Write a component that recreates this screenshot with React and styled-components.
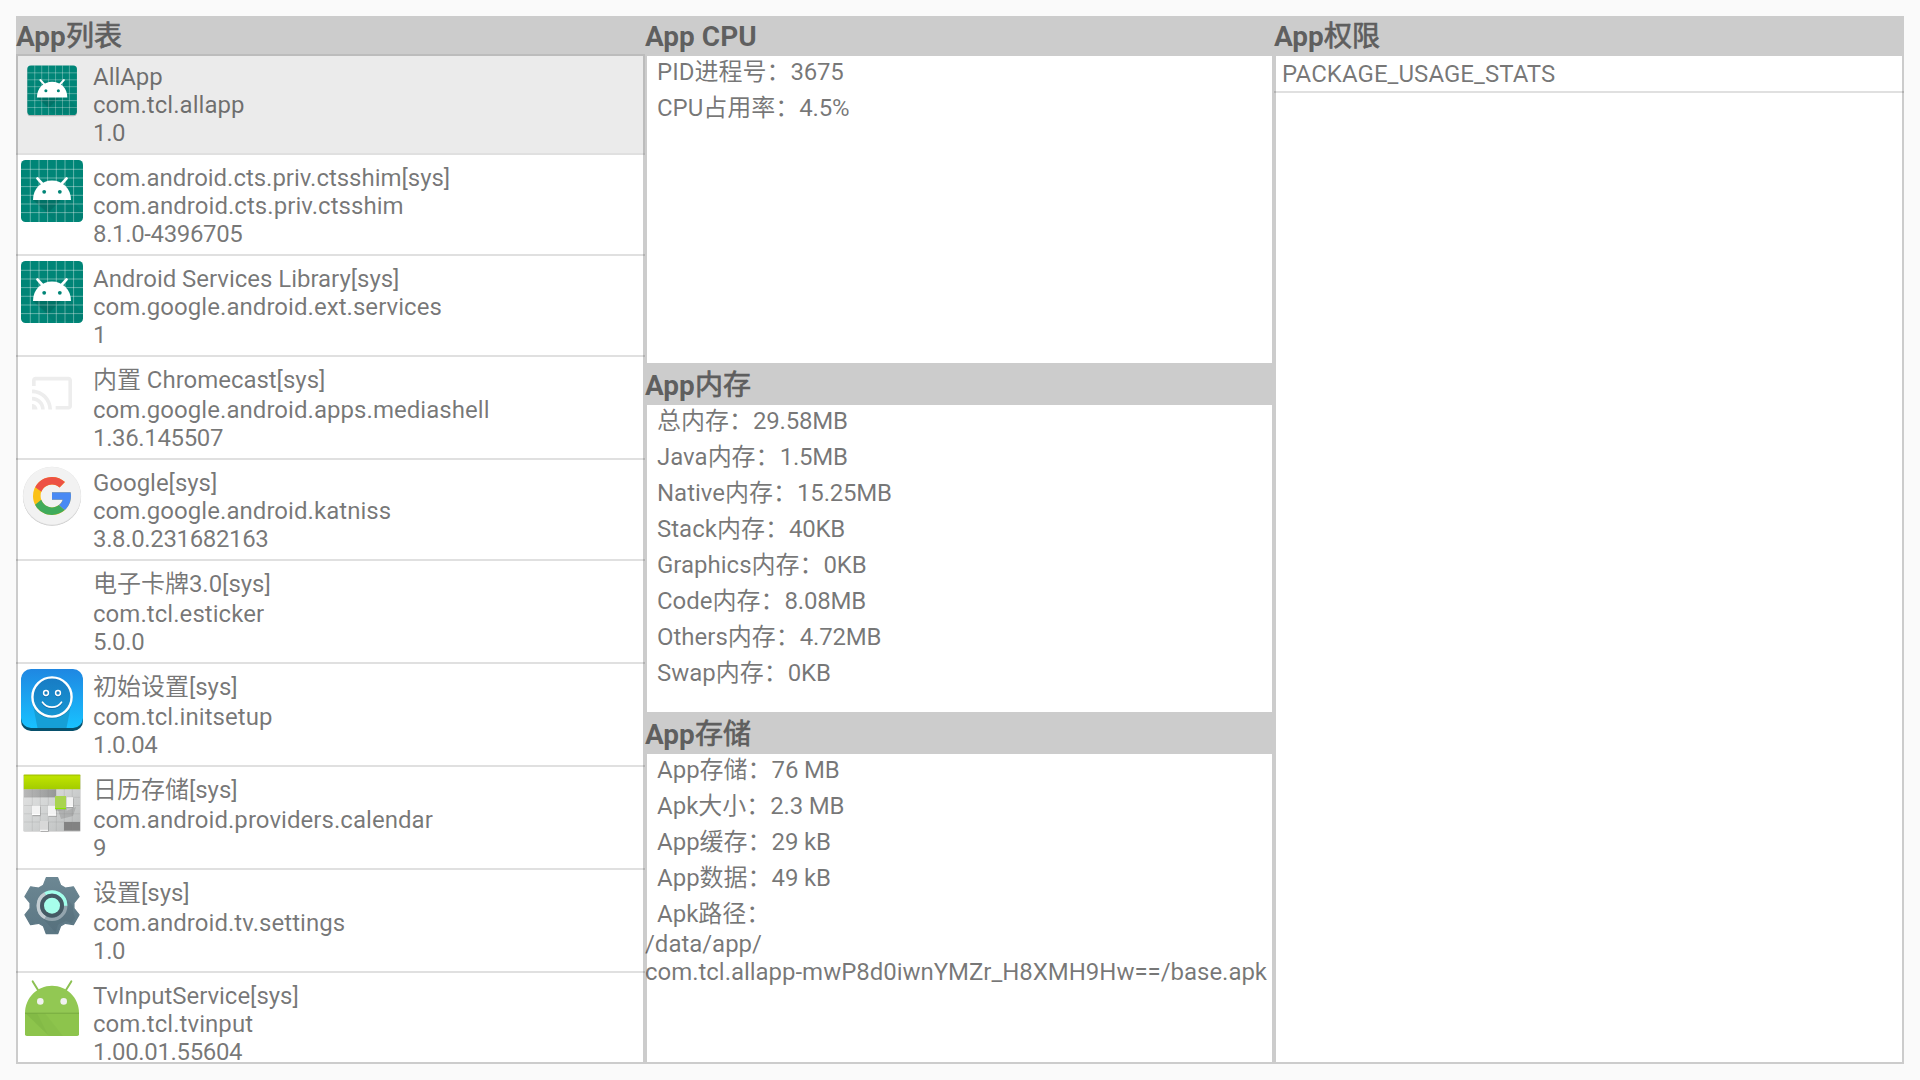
import React from 'react';
import styled, { createGlobalStyle } from 'styled-components';

const GlobalStyle = createGlobalStyle`
  * { box-sizing: border-box; }
  body {
    margin: 0;
    background: #fafafa;
    color: rgba(0, 0, 0, 0.54);
    font-family: Roboto, 'Noto Sans CJK SC', sans-serif;
    font-size: 24px;
    line-height: 28px;
  }
`;

const Screen = styled.main`
  display: grid;
  grid-template-columns: 629px 629px 630px;
  width: 1920px;
  height: 1080px;
  padding: 16px;
  overflow: hidden;
`;

const Column = styled.section`
  display: flex;
  flex-direction: column;
  min-width: 0;
  min-height: 0;
`;

const Title = styled.h2`
  flex: none;
  height: 38px;
  margin: 0;
  padding-top: 5px;
  background: #ccc;
  font-size: 28px;
  font-weight: 700;
  line-height: 32px;
  white-space: nowrap;
`;

const Han = styled.span`
  font-weight: 400;
  -webkit-text-stroke: 0.7px #5e5e5e;
  color: #5e5e5e;
`;

const Panel = styled.div`
  flex: ${(p) => (p.$height ? `0 0 ${p.$height}px` : '1 1 0')};
  min-height: 0;
  overflow: hidden;
  background: #fff;
  box-shadow: inset 0 0 0 2px #ccc;
`;

const AppRow = styled.div`
  display: flex;
  align-items: flex-start;
  gap: 10px;
  height: ${(p) => (p.$tall ? 103 : 101)}px;
  padding-left: 5px;
  border-bottom: 2px solid rgba(0, 0, 0, 0.12);
  background: ${(p) => (p.$selected ? 'rgba(0, 0, 0, 0.08)' : 'transparent')};
  background-clip: padding-box;
`;

const IconBox = styled.div`
  flex: none;
  width: 62px;
  height: 62px;
  margin-top: 5px;

  svg { display: block; }
`;

const AppText = styled.div`
  padding-top: 9px;
  white-space: nowrap;
`;

const AppName = styled.div`
  margin-bottom: ${(p) => (p.$tall ? 2 : 0)}px;
  letter-spacing: -0.03px;
`;

const PackageName = styled.div`
  letter-spacing: 0.05px;
`;

const Version = styled.div`
  margin-top: 2px;
  line-height: 24px;
  letter-spacing: -0.36px;
`;

const Stat = styled.div`
  padding-left: 12px;
  line-height: 36px;
  white-space: nowrap;
`;

const StatValue = styled.span`
  letter-spacing: -0.2px;
`;

const PathText = styled.div`
  margin-top: -2px;
  letter-spacing: -0.03px;
`;

const Permission = styled.div`
  height: 39px;
  padding: 6px 0 0 8px;
  border-bottom: 2px solid rgba(0, 0, 0, 0.12);
  letter-spacing: 0.05px;
`;

const Svg = ({ children, viewBox = '0 0 62 62' }) => (
  <svg width="62" height="62" viewBox={viewBox}>{children}</svg>
);

const GRID = [9.3, 18, 26.6, 35.3, 44, 52.6];

const GridRobot = ({ small }) => (
  <Svg viewBox={small ? '-7.9 -8 77.5 77.5' : '0 0 62 62'}>
    {small && <rect x="0" y="1.6" width="62" height="62" rx="4.5" fill="#000" opacity="0.22" />}
    <rect width="62" height="62" rx="4.5" fill="#008577" />
    <path
      d={GRID.map((v) => `M${v} 0V62M0 ${v}H62`).join('')}
      stroke="#fff"
      strokeOpacity="0.42"
      strokeWidth="0.9"
    />
    <path d="M12 40L32 60L62 60V52L50 40Z" fill="#000" opacity="0.04" />
    <path d="M12 40L27 53L40 40Z" fill="#000" opacity="0.1" />
    <path d="M12 40C12 28.5 20.5 20.5 31 20.5S50 28.5 50 40Z" fill="#fff" />
    <path d="M16.4 18.4L21.5 24M45.6 18.4L40.5 24" stroke="#fff" strokeWidth="2.6" strokeLinecap="round" />
    <circle cx="23.2" cy="31.8" r="1.9" fill="#008577" />
    <circle cx="38.8" cy="31.8" r="1.9" fill="#008577" />
  </Svg>
);

const Cast = () => (
  <Svg>
    <g transform="translate(9.2 9.4) scale(1.818)">
      <path
        fill="#ededed"
        d="M21 3H3c-1.1 0-2 .9-2 2v3h2V5h18v14h-7v2h7c1.1 0 2-.9 2-2V5c0-1.1-.9-2-2-2zM1 18v3h3c0-1.66-1.34-3-3-3zm0-4v2c2.76 0 5 2.24 5 5h2c0-3.87-3.13-7-7-7zm0-4v2c4.97 0 9 4.03 9 9h2c0-6.08-4.93-11-11-11z"
      />
    </g>
  </Svg>
);

const GoogleG = () => (
  <Svg>
    <circle cx="31" cy="31.8" r="29" fill="#c4c4c4" />
    <circle cx="31" cy="31" r="29.2" fill="#e2e2e2" />
    <circle cx="31" cy="30.7" r="28.8" fill="#f2f2f2" />
    <g transform="translate(8.2 8.2) scale(0.95)">
      <path fill="#fbc116" d="M43.611 20.083H42V20H24v8h11.303c-1.649 4.657-6.08 8-11.303 8c-6.627 0-12-5.373-12-12c0-6.627 5.373-12 12-12c3.059 0 5.842 1.154 7.961 3.039l5.657-5.657C34.046 6.053 29.268 4 24 4C12.955 4 4 12.955 4 24c0 11.045 8.955 20 20 20c11.045 0 20-8.955 20-20C44 22.659 43.862 21.35 43.611 20.083z" />
      <path fill="#ed5144" d="M6.306 14.691l6.571 4.819C14.655 15.108 18.961 12 24 12c3.059 0 5.842 1.154 7.961 3.039l5.657-5.657C34.046 6.053 29.268 4 24 4C16.318 4 9.656 8.337 6.306 14.691z" />
      <path fill="#3fab5b" d="M24 44c5.166 0 9.86-1.977 13.409-5.192l-6.19-5.238C29.211 35.091 26.715 36 24 36c-5.202 0-9.619-3.317-11.283-7.946l-6.522 5.025C9.505 39.556 16.227 44 24 44z" />
      <path fill="#4889f4" d="M43.611 20.083H42V20H24v8h11.303c-.792 2.237-2.231 4.166-4.084 5.569l6.19 5.238C36.971 39.205 44 34 44 24C44 22.659 43.862 21.35 43.611 20.083z" />
    </g>
  </Svg>
);

const Smile = () => (
  <Svg>
    <defs>
      <linearGradient id="sky" x1="0" y1="0" x2="0" y2="1">
        <stop offset="0" stopColor="#1f87e2" />
        <stop offset="1" stopColor="#18c2ff" />
      </linearGradient>
      <linearGradient id="face" x1="0" y1="0" x2="0" y2="1">
        <stop offset="0" stopColor="#187bc4" />
        <stop offset="1" stopColor="#1796d2" />
      </linearGradient>
    </defs>
    <rect y="2" width="62" height="60" rx="10" fill="#07506c" />
    <rect width="62" height="59" rx="10" fill="url(#sky)" />
    <path d="M12 36L16.5 59H45.500L50 36Z" fill="#169fd6" />
    <circle cx="31" cy="29" r="20.600" fill="#0c5f96" opacity="0.5" />
    <circle cx="31" cy="28" r="19.6" fill="url(#face)" stroke="#fff" strokeWidth="2.4" />
    <g fill="none" strokeLinecap="round">
      <g stroke="#0d5c95" opacity="0.6" transform="translate(0 1)">
        <circle cx="25" cy="24" r="2.400" strokeWidth="1.500" />
        <circle cx="37" cy="24" r="2.400" strokeWidth="1.500" />
        <path d="M21.500 33.200C26 39.700 36 39.700 40.500 33.200" strokeWidth="1.700" />
      </g>
      <g stroke="#fff">
        <circle cx="25" cy="24" r="2.400" strokeWidth="1.500" />
        <circle cx="37" cy="24" r="2.400" strokeWidth="1.500" />
        <path d="M21.500 33.200C26 39.700 36 39.700 40.500 33.200" strokeWidth="1.700" />
      </g>
    </g>
  </Svg>
);

const WHITE_TILES = [
  [11, 33.6, 8, 9.4],
  [27, 33.6, 8.2, 10],
  [45, 25.2, 7, 9.8],
  [19, 49, 8, 9.8],
];

const CalendarIcon = () => (
  <Svg>
    <defs>
      <linearGradient id="lime" x1="0" y1="0" x2="0" y2="1">
        <stop offset="0" stopColor="#c3e600" />
        <stop offset="1" stopColor="#a3cc00" />
      </linearGradient>
      <linearGradient id="sheet" x1="0" y1="0" x2="1" y2="1">
        <stop offset="0" stopColor="#e6e6e6" />
        <stop offset="0.5" stopColor="#d2d4d4" />
        <stop offset="1" stopColor="#b8baba" />
      </linearGradient>
      <linearGradient id="band" x1="0" y1="0" x2="1" y2="0">
        <stop offset="0" stopColor="#b8b8b8" />
        <stop offset="1" stopColor="#969898" />
      </linearGradient>
    </defs>
    <rect x="2.300" y="2.200" width="57.400" height="57.600" rx="1.500" fill="#cfcfcf" />
    <rect x="3" y="3" width="56" height="56" fill="url(#sheet)" />
    <rect x="3" y="17.200" width="32" height="8" fill="url(#band)" />
    <rect x="43" y="50" width="16" height="8.600" fill="#828282" />
    <path d="M11.300 17V59M19.300 17V59M27.300 17V59M35.300 17V59M43.300 17V59M51.300 17V59M3 25.300H59M3 33.500H59M3 41.800H59M3 50H59" stroke="#8c8c8c" strokeOpacity="0.3" strokeWidth="0.700" />
    <path d="M37 38L45 39L55 35L52 44L40 47Z" fill="#777" opacity="0.3" />
    {WHITE_TILES.map(([x, y, w, h]) => (
      <React.Fragment key={`${x}-${y}`}>
        <rect x={x + 0.7} y={y + 1.2} width={w} height={h} fill="#777" opacity="0.45" />
        <rect x={x} y={y} width={w} height={h} fill={y > 45 ? '#d8d8d8' : '#f3f3f3'} />
        <rect x={x} y={y + h - 1} width={w} height="1" fill="#fff" />
      </React.Fragment>
    ))}
    <rect x="34.600" y="25" width="11" height="13.600" fill="#666" opacity="0.35" />
    <rect x="34" y="24" width="11" height="13" fill="#a9d450" />
    <rect x="34" y="36" width="11" height="1.200" fill="#87e400" />
    <rect x="2.800" y="2.600" width="56.400" height="14.600" fill="url(#lime)" />
    <rect x="2.800" y="3.200" width="56.400" height="0.900" fill="#a6c800" />
  </Svg>
);

const GEAR_POINTS = [0, 60, 120, 180, 240, 300]
  .flatMap((deg) => {
    const a = (deg * Math.PI) / 180;
    return [[-8.6, -20.4], [-5.7, -28], [5.7, -28], [8.6, -20.4]].map(([x, y]) => [
      31 + x * Math.cos(a) - y * Math.sin(a),
      30.7 + x * Math.sin(a) + y * Math.cos(a),
    ]);
  })
  .map((p) => p.map((v) => v.toFixed(2)).join(','))
  .join(' ');

const Gear = () => (
  <Svg>
    <defs>
      <linearGradient id="steel" x1="0" y1="0" x2="0" y2="1">
        <stop offset="0" stopColor="#6c8793" />
        <stop offset="1" stopColor="#5b7683" />
      </linearGradient>
    </defs>
    <polygon points={GEAR_POINTS} fill="url(#steel)" stroke="url(#steel)" strokeWidth="1.200" strokeLinejoin="round" />
    <path d="M20.500 42L34.500 57.500L37 49.500L45 46L50.500 48L54 43L52 36V31L43.500 21Z" fill="#455a64" opacity="0.18" />
    <g fill="none" strokeWidth="3.400">
      <circle cx="31" cy="30.700" r="13.700" stroke="#93a5ae" />
      <path d="M24.200 42.600A13.700 13.700 0 0 1 24.200 18.800" stroke="#c3cdd2" />
      <path d="M24.200 18.800A13.700 13.700 0 0 1 44.700 30.700" stroke="#a2ffeb" />
    </g>
    <circle cx="31" cy="30.700" r="11.900" fill="#455a64" />
    <circle cx="31" cy="30.700" r="8" fill="#a7ffeb" />
  </Svg>
);

const GreenRobot = () => (
  <Svg>
    <path d="M11.700 3.400L17 12M50.300 3.400L45 12" stroke="#8cc152" strokeWidth="2" strokeLinecap="round" />
    <path d="M4 35C4 20 16 7.700 31 7.700S58 20 58 35Z" fill="#92c853" />
    <path d="M4 35H58V56.200Q58 58 56.200 58H5.800Q4 58 4 56.200Z" fill="#8dc44c" />
    <path d="M4.500 35.200L28 58H42L24 35.200Z" fill="#689f38" opacity="0.12" />
    <path d="M4.500 35.200L27 57L16 35.200Z" fill="#689f38" opacity="0.16" />
    <path d="M4 35.200H58" stroke="#71a53c" strokeWidth="0.800" />
    <circle cx="19.300" cy="23.400" r="3.300" fill="#f1f1f1" />
    <circle cx="42.700" cy="23.400" r="3.300" fill="#f1f1f1" />
  </Svg>
);

const APPS = [
  { name: 'AllApp', pkg: 'com.tcl.allapp', version: '1.0', icon: <GridRobot small />, selected: true },
  { name: 'com.android.cts.priv.ctsshim[sys]', pkg: 'com.android.cts.priv.ctsshim', version: '8.1.0-4396705', icon: <GridRobot /> },
  { name: 'Android Services Library[sys]', pkg: 'com.google.android.ext.services', version: '1', icon: <GridRobot /> },
  { name: '内置 Chromecast[sys]', pkg: 'com.google.android.apps.mediashell', version: '1.36.145507', icon: <Cast />, tall: true },
  { name: 'Google[sys]', pkg: 'com.google.android.katniss', version: '3.8.0.231682163', icon: <GoogleG /> },
  { name: '电子卡牌3.0[sys]', pkg: 'com.tcl.esticker', version: '5.0.0', icon: null, tall: true },
  { name: '初始设置[sys]', pkg: 'com.tcl.initsetup', version: '1.0.04', icon: <Smile />, tall: true },
  { name: '日历存储[sys]', pkg: 'com.android.providers.calendar', version: '9', icon: <CalendarIcon />, tall: true },
  { name: '设置[sys]', pkg: 'com.android.tv.settings', version: '1.0', icon: <Gear />, tall: true },
  { name: 'TvInputService[sys]', pkg: 'com.tcl.tvinput', version: '1.00.01.55604', icon: <GreenRobot /> },
];

const CPU = [
  ['PID进程号：', '3675'],
  ['CPU占用率：', '4.5%'],
];

const MEMORY = [
  ['总内存：', '29.58MB'],
  ['Java内存：', '1.5MB'],
  ['Native内存：', '15.25MB'],
  ['Stack内存：', '40KB'],
  ['Graphics内存：', '0KB'],
  ['Code内存：', '8.08MB'],
  ['Others内存：', '4.72MB'],
  ['Swap内存：', '0KB'],
];

const STORAGE = [
  ['App存储：', '76 MB'],
  ['Apk大小：', '2.3 MB'],
  ['App缓存：', '29 kB'],
  ['App数据：', '49 kB'],
  ['Apk路径：', ''],
];

const Stats = ({ items }) =>
  items.map(([label, value]) => (
    <Stat key={label}>
      {label}
      <StatValue>{value}</StatValue>
    </Stat>
  ));

export default function App() {
  return (
    <>
      <GlobalStyle />
      <Screen>
        <Column>
          <Title>App<Han>列表</Han></Title>
          <Panel>
            {APPS.map((app) => (
              <AppRow key={app.pkg} $tall={app.tall} $selected={app.selected}>
                <IconBox>{app.icon}</IconBox>
                <AppText>
                  <AppName $tall={app.tall}>{app.name}</AppName>
                  <PackageName>{app.pkg}</PackageName>
                  <Version>{app.version}</Version>
                </AppText>
              </AppRow>
            ))}
          </Panel>
        </Column>
        <Column>
          <Title>App CPU</Title>
          <Panel $height={311}>
            <Stats items={CPU} />
          </Panel>
          <Title>App<Han>内存</Han></Title>
          <Panel $height={311}>
            <Stats items={MEMORY} />
          </Panel>
          <Title>App<Han>存储</Han></Title>
          <Panel>
            <Stats items={STORAGE} />
            <PathText>
              /data/app/
              <br />
              com.tcl.allapp-mwP8d0iwnYMZr_H8XMH9Hw==/base.apk
            </PathText>
          </Panel>
        </Column>
        <Column>
          <Title>App<Han>权限</Han></Title>
          <Panel>
            <Permission>PACKAGE_USAGE_STATS</Permission>
          </Panel>
        </Column>
      </Screen>
    </>
  );
}
